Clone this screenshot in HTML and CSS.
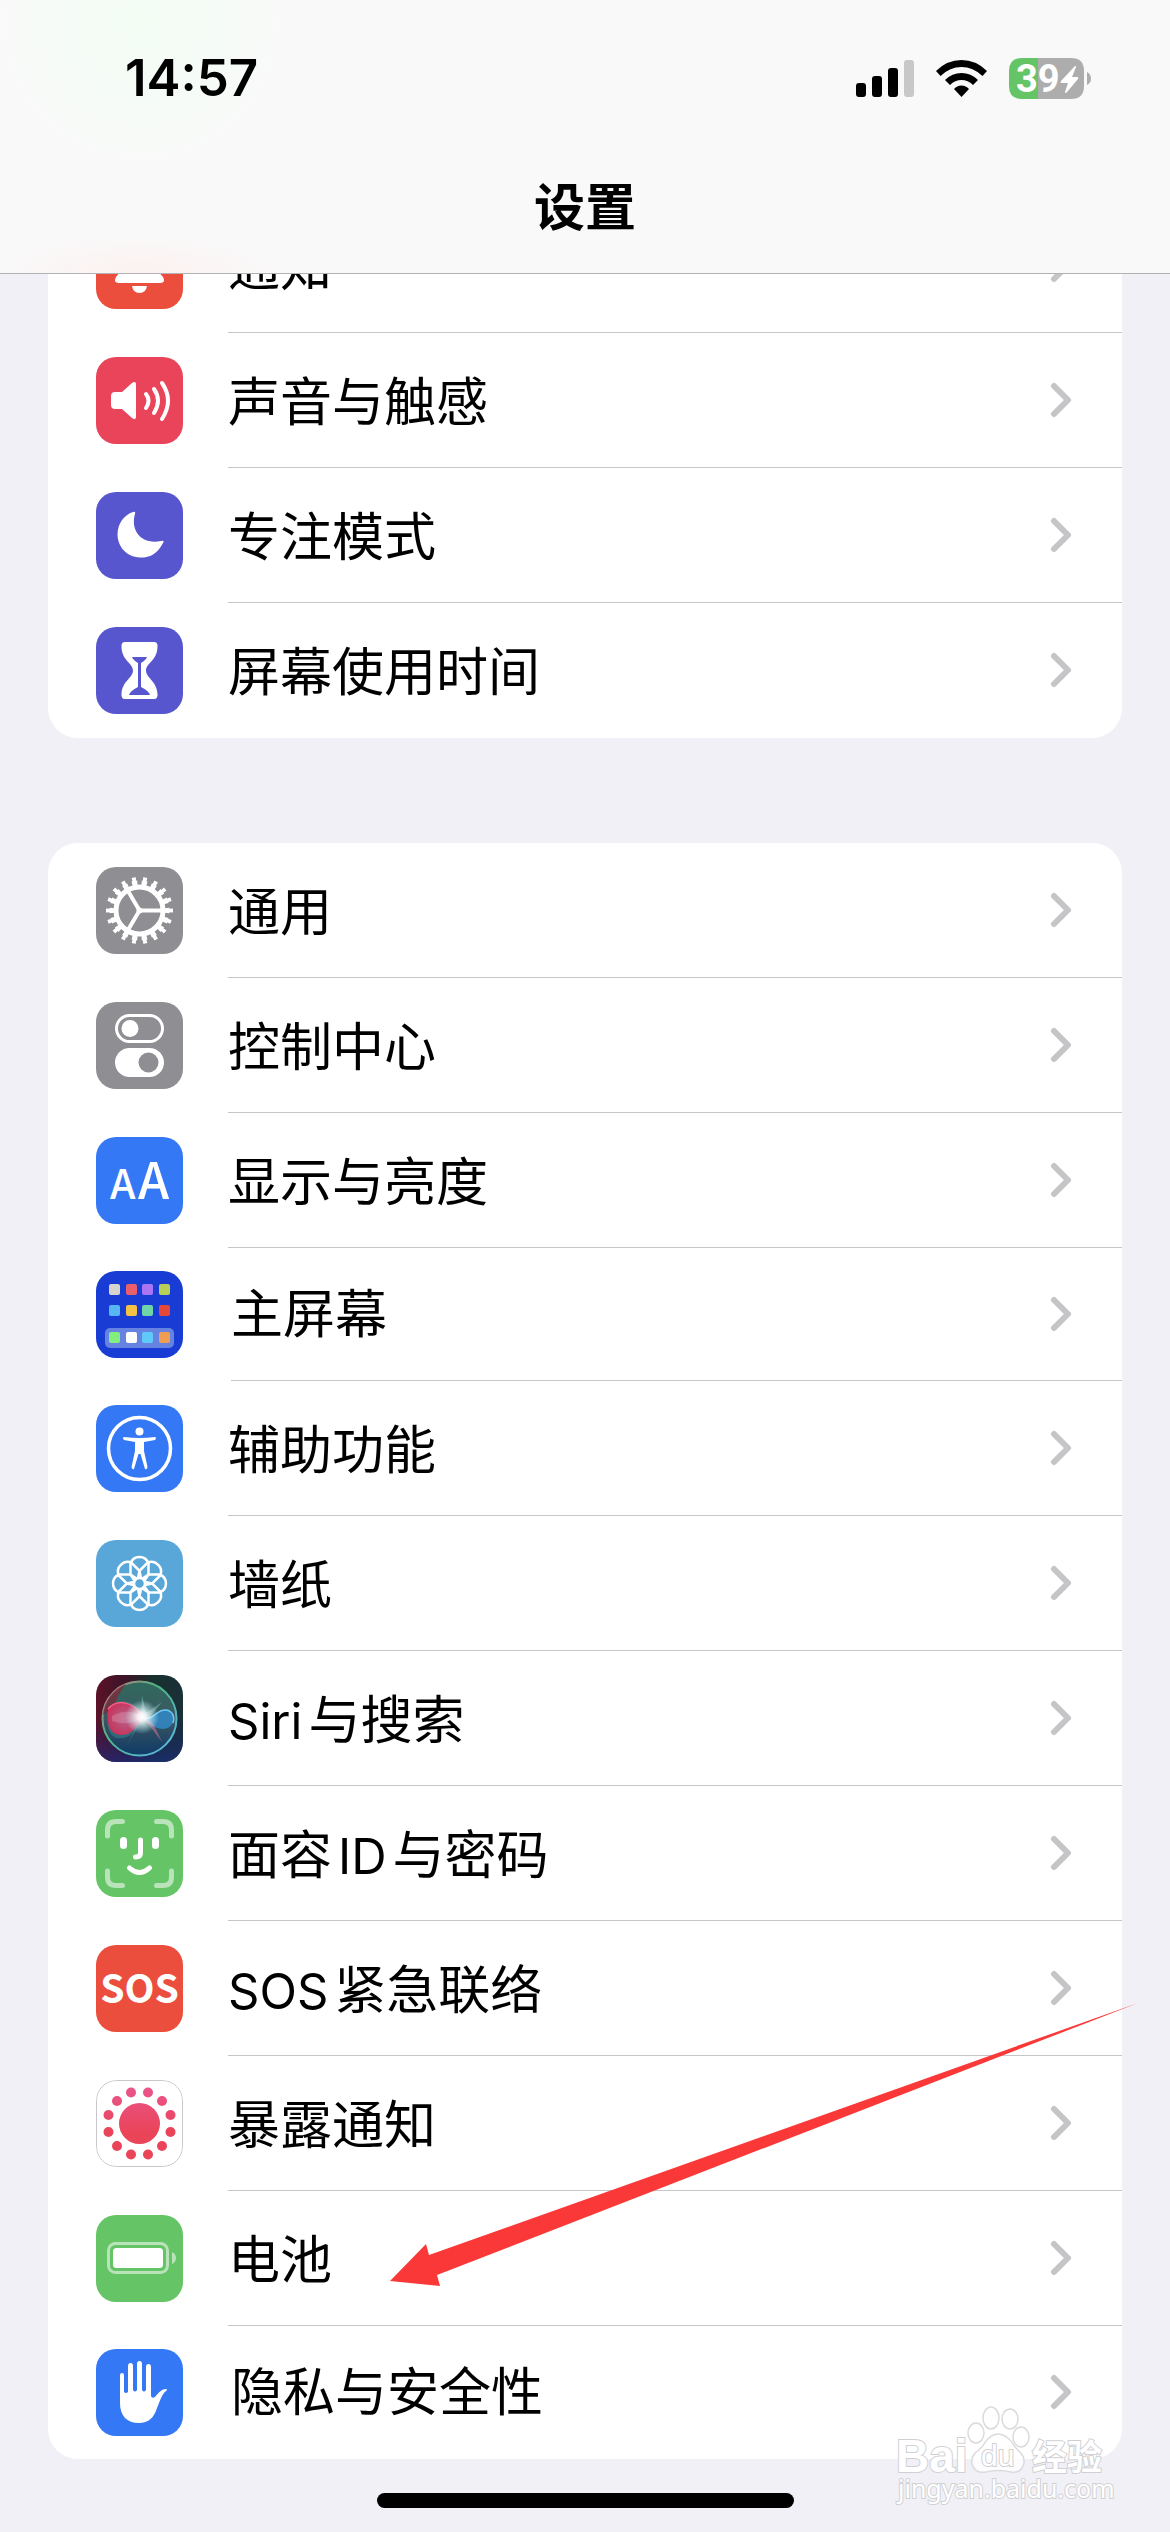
FILE: index.html
```html
<!DOCTYPE html>
<html lang="zh-CN">
<head>
<meta charset="utf-8">
<meta name="viewport" content="width=device-width, initial-scale=1">
<title>设置</title>
<link rel="stylesheet" href="styles.css">
</head>
<body>
<svg class="defs" width="0" height="0" aria-hidden="true">
  <defs>
    <path id="chevron" d="M4 4 18 18 4 32"/>
    <path id="petal" d="M-3-5-9-9V-20A9.500 9.500 0 0 1 9-20V-9L3-5"/>
    <linearGradient id="pink" x1="0" y1="0" x2="0" y2="87" gradientUnits="userSpaceOnUse"><stop offset=".1" stop-color="#e9558a"/><stop offset=".6" stop-color="#ea4459"/></linearGradient>
    <linearGradient id="siri-bg" x1="0" y1="0" x2="1" y2="0"><stop offset="0" stop-color="#5d1228"/><stop offset=".35" stop-color="#3a1428"/><stop offset=".65" stop-color="#17302e"/><stop offset="1" stop-color="#1b3038"/></linearGradient>
    <linearGradient id="siri-low" x1="0" y1="0" x2="0" y2="1"><stop offset=".5" stop-color="#10206a" stop-opacity="0"/><stop offset="1" stop-color="#1c2c80" stop-opacity=".7"/></linearGradient>
    <linearGradient id="siri-ring" x1="0" y1="0" x2="1" y2="1"><stop offset="0" stop-color="#d06f80"/><stop offset=".4" stop-color="#4db583"/><stop offset="1" stop-color="#5fb4f2"/></linearGradient>
    <linearGradient id="siri-orb" x1="0" y1="0" x2="0" y2="1"><stop offset="0" stop-color="#2f6a5c"/><stop offset=".5" stop-color="#3c5862"/><stop offset="1" stop-color="#0e3a66"/></linearGradient>
    <radialGradient id="siri-red"><stop offset="0" stop-color="#c0628e"/><stop offset="1" stop-color="#d6305c"/></radialGradient>
    <radialGradient id="siri-glow"><stop offset="0" stop-color="#fff"/><stop offset=".25" stop-color="#fff" stop-opacity=".9"/><stop offset="1" stop-color="#bff" stop-opacity="0"/></radialGradient>
  </defs>
</svg>

<header class="header">
  <div class="status">
    <time class="clock">14:57</time>
    <div class="indicators">
      <svg width="58" height="37" viewBox="0 0 58 37" role="img" aria-label="信号"><rect y="23" width="10" height="14" rx="3"/><rect x="16" y="16" width="10" height="21" rx="3"/><rect x="32" y="8" width="10" height="29" rx="3"/><rect x="48" width="10" height="37" rx="3" fill="#c8c8c8"/></svg>
      <svg width="51" height="37" viewBox="0 0 51 37" role="img" aria-label="无线网络"><path d="M0 11Q11 0 25.500 0T51 11L46.500 16Q37 7 25.500 7T4.500 16ZM9 20Q16 13 25.500 13T42 20L37 25Q32 20 25.500 20T14 25ZM18 29Q21 25.500 25.500 25.500T33 29L25.500 37Z"/></svg>
      <svg class="battery" width="83" height="41" viewBox="0 0 83 41" role="img" aria-label="电量 39"><path d="M29 0H62Q75 0 75 13V28Q75 41 62 41H29Z" fill="#adadad"/><path d="M29 0H13Q0 0 0 13V28Q0 41 13 41H29Z" fill="#65c466"/><path d="M78 14Q82 16 82 20.500T78 27Z" fill="#adadad"/><text x="7" y="34">39</text><path d="M66 8 52 23Q51 25 53 25H59L56 34Q56 36 58 34L69 21Q70 19 68 19H63L67 9Q67 7 66 8Z" fill="#fff"/></svg>
    </div>
  </div>
  <h1 class="title">设置</h1>
</header>

<main class="content">
  <ul class="group">
    <li><a class="row" href="#notifications">
      <svg class="icon red" viewBox="0 0 87 87"><path fill="#fff" d="M43.500 14C31 14 28 24 28 34 28 47 24 50 20 55Q17 61 23 61H64Q70 61 67 55C63 50 59 47 59 34 59 24 56 14 43.500 14ZM36 64H51Q50 71 43.500 71T36 64Z"/></svg>
      <span class="body"><span class="label">通知</span><svg class="chevron" viewBox="0 0 22 36"><use href="#chevron"/></svg></span></a></li>
    <li><a class="row" href="#sounds">
      <svg class="icon rose" viewBox="0 0 87 87"><path fill="#fff" d="M19 35H26L36 26Q40 23 40 28V59Q40 64 36 61L26 52H19Q15 52 15 48V39Q15 35 19 35Z"/><path class="line" stroke-width="4" d="M50 37Q55 43.500 50 51M58 32Q66 43.500 58 56M66 26Q78 43.500 66 62"/></svg>
      <span class="body"><span class="label">声音与触感</span><svg class="chevron" viewBox="0 0 22 36"><use href="#chevron"/></svg></span></a></li>
    <li><a class="row" href="#focus">
      <svg class="icon indigo" viewBox="0 0 87 87"><path fill="#fff" d="M37 20Q40 19 39 22C34 39 46 53 65 49Q69 48 67 51C61 63 52 66 44 65.500 30 65 21.500 54 21.500 42 22 31 28 23 37 20Z"/></svg>
      <span class="body"><span class="label">专注模式</span><svg class="chevron" viewBox="0 0 22 36"><use href="#chevron"/></svg></span></a></li>
    <li><a class="row" href="#screen-time">
      <svg class="icon indigo" viewBox="0 0 87 87"><path fill="#fff" d="M29 15H58Q62 15 61.500 20C61 34 50 36 50 43.500S61 54 61.500 67Q62 72 58 72H29Q25 72 25.500 67C26 54 37 51 37 43.500S26 34 25.500 20Q25 15 29 15Z"/><path fill="#5856ce" d="M36 30H51Q50 33 45 36V60Q53 64 54 68H33Q34 64 42 60V36Q37 33 36 30Z"/></svg>
      <span class="body"><span class="label">屏幕使用时间</span><svg class="chevron" viewBox="0 0 22 36"><use href="#chevron"/></svg></span></a></li>
  </ul>

  <ul class="group">
    <li><a class="row" href="#general">
      <svg class="icon gray" viewBox="0 0 87 87"><g fill="none" stroke="#fff"><circle cx="43.500" cy="43.500" r="23.500" stroke-width="5"/><circle cx="43.500" cy="43.500" r="27.500" stroke-width="5" pathLength="36" stroke-dasharray="1.100 .9" stroke-dashoffset=".550"/><circle cx="43.500" cy="43.500" r="31" stroke-width="5" pathLength="36" stroke-dasharray=".700 1.300" stroke-dashoffset=".350"/><path stroke-width="4" d="M43.500 43.500H66M43.500 43.500 32 24M43.500 43.500 32 63"/></g><circle cx="43.500" cy="43.500" r="3" fill="#fff"/></svg>
      <span class="body"><span class="label">通用</span><svg class="chevron" viewBox="0 0 22 36"><use href="#chevron"/></svg></span></a></li>
    <li><a class="row" href="#control-center">
      <svg class="icon gray" viewBox="0 0 87 87"><rect x="20.500" y="13.500" width="46" height="26" rx="13" fill="none" stroke="#fff" stroke-width="3"/><circle cx="34" cy="26.500" r="8.500" fill="#fff"/><rect x="19" y="46" width="49" height="29" rx="14.500" fill="#fff"/><circle cx="52.500" cy="60.500" r="10" fill="#8e8e93"/></svg>
      <span class="body"><span class="label">控制中心</span><svg class="chevron" viewBox="0 0 22 36"><use href="#chevron"/></svg></span></a></li>
    <li><a class="row" href="#display">
      <svg class="icon blue" viewBox="0 0 87 87"><text class="glyph" x="14" y="62" font-size="41">A</text><text class="glyph" x="42" y="62" font-size="50">A</text></svg>
      <span class="body"><span class="label">显示与亮度</span><svg class="chevron" viewBox="0 0 22 36"><use href="#chevron"/></svg></span></a></li>
    <li><a class="row compact" href="#home-screen">
      <svg class="icon navy" viewBox="0 0 87 87"><rect x="9" y="57" width="69" height="20" rx="5" fill="#6783e2"/><rect x="13" y="13" width="11" height="11" rx="2" fill="#d6d4cd"/><rect x="30" y="13" width="11" height="11" rx="2" fill="#ea5f6c"/><rect x="46" y="13" width="11" height="11" rx="2" fill="#aa75f4"/><rect x="63" y="13" width="11" height="11" rx="2" fill="#b8cf55"/><rect x="13" y="34" width="11" height="11" rx="2" fill="#57b7f4"/><rect x="30" y="34" width="11" height="11" rx="2" fill="#f4c245"/><rect x="46" y="34" width="11" height="11" rx="2" fill="#70d5a8"/><rect x="63" y="34" width="11" height="11" rx="2" fill="#e54839"/><rect x="13" y="61" width="11" height="11" rx="2" fill="#83ee80"/><rect x="30" y="61" width="11" height="11" rx="2" fill="#fff"/><rect x="46" y="61" width="11" height="11" rx="2" fill="#5fc9f8"/><rect x="63" y="61" width="11" height="11" rx="2" fill="#f09d54"/></svg>
      <span class="body"><span class="label">主屏幕</span><svg class="chevron" viewBox="0 0 22 36"><use href="#chevron"/></svg></span></a></li>
    <li><a class="row" href="#accessibility">
      <svg class="icon blue" viewBox="0 0 87 87"><circle cx="43.500" cy="43.500" r="31" fill="none" stroke="#fff" stroke-width="3.500"/><circle cx="43.500" cy="26.500" r="4" fill="#fff"/><path fill="#fff" d="M28 32Q43.500 34 59 32 61 33 59 35L48 37V46L51.500 62Q51 65 49 64L44.500 49H42.500L38 64Q36 65 35.500 62L39 46V37L28 35Q26 33 28 32Z"/></svg>
      <span class="body"><span class="label">辅助功能</span><svg class="chevron" viewBox="0 0 22 36"><use href="#chevron"/></svg></span></a></li>
    <li><a class="row" href="#wallpaper">
      <svg class="icon sky" viewBox="0 0 87 87"><g transform="translate(43.500 43.500)" fill="none" stroke="#fff" stroke-width="2.500"><circle r="5.500"/><use href="#petal"/><use href="#petal" transform="rotate(45)"/><use href="#petal" transform="rotate(90)"/><use href="#petal" transform="rotate(135)"/><use href="#petal" transform="rotate(180)"/><use href="#petal" transform="rotate(225)"/><use href="#petal" transform="rotate(270)"/><use href="#petal" transform="rotate(315)"/></g></svg>
      <span class="body"><span class="label">墙纸</span><svg class="chevron" viewBox="0 0 22 36"><use href="#chevron"/></svg></span></a></li>
    <li><a class="row" href="#siri">
      <svg class="icon" viewBox="0 0 87 87"><rect width="87" height="87" fill="url(#siri-bg)"/><rect width="87" height="87" fill="url(#siri-low)"/><circle cx="43.500" cy="43.500" r="37" fill="url(#siri-orb)" stroke="url(#siri-ring)" stroke-width="2"/><path d="M7 40A37 37 0 0 1 30 9Q20 22 18 33Z" fill="#7a2a3c" opacity=".8"/><path d="M20 28Q38 22 48 42 38 66 20 63 10 58 12 44 12 32 20 28Z" fill="#3a8f94" opacity=".45"/><path d="M12 34C22 22 38 28 47 41 40 56 32 61 24 60 14 59 10 50 12 34Z" fill="url(#siri-red)" opacity=".9"/><path d="M16 41Q32 32 47 42 34 52 16 46Z" fill="#e9a0b8" opacity=".35"/><path d="M12 34C22 22 38 28 47 41" fill="none" stroke="#f45c86" stroke-width="1.500"/><path d="M46 43C58 46 60 34 70 35 77 36 79 42 77 48 72 57 60 56 46 43Z" fill="#3188c8" opacity=".85"/><path d="M46 43C58 46 60 34 70 35 77 36 79 42 77 48" fill="none" stroke="#6cc8f4" stroke-width="1.500"/><path d="M47 42 66 67 57 48Z" fill="#e07a9a" opacity=".5"/><path d="M45 44 30 72 38 58Z" fill="#7cc0e0" opacity=".5"/><path d="M45 42 46 20 50 38 66 27 53 43Z" fill="#bff" opacity=".3"/><circle cx="46" cy="42" r="17" fill="url(#siri-glow)"/></svg>
      <span class="body"><span class="label"><span class="latin-start">Siri</span>与搜索</span><svg class="chevron" viewBox="0 0 22 36"><use href="#chevron"/></svg></span></a></li>
    <li><a class="row" href="#face-id">
      <svg class="icon green" viewBox="0 0 87 87"><path class="line" stroke-width="5" opacity=".55" d="M11.500 26V20Q11.500 11.500 20 11.500H26.500M60.500 11.500H67Q75.500 11.500 75.500 20V26M75.500 61V67Q75.500 75.500 67 75.500H60.500M26.500 75.500H20Q11.500 75.500 11.500 67V61"/><rect x="24" y="27" width="7" height="12" rx="3.500" fill="#fff"/><rect x="56" y="27" width="7" height="12" rx="3.500" fill="#fff"/><path class="line" stroke-width="5" d="M44.500 30V43Q44.500 47 39.500 47M33.500 58Q43.500 67 53.500 58"/></svg>
      <span class="body"><span class="label">面容<span class="latin">ID</span>与密码</span><svg class="chevron" viewBox="0 0 22 36"><use href="#chevron"/></svg></span></a></li>
    <li><a class="row" href="#sos">
      <svg class="icon red" viewBox="0 0 87 87"><text class="sos" x="43.500" y="58" text-anchor="middle">SOS</text></svg>
      <span class="body"><span class="label"><span class="latin-start">SOS</span>紧急联络</span><svg class="chevron" viewBox="0 0 22 36"><use href="#chevron"/></svg></span></a></li>
    <li><a class="row" href="#exposure">
      <svg class="icon" viewBox="0 0 87 87"><g fill="url(#pink)"><circle cx="43.500" cy="43.500" r="20.500"/><circle cx="74.500" cy="35" r="5"/><circle cx="66" cy="21" r="5"/><circle cx="52" cy="12.500" r="5"/><circle cx="35" cy="12.500" r="5"/><circle cx="21" cy="21" r="5"/><circle cx="12.500" cy="35" r="5"/><circle cx="12.500" cy="52" r="5"/><circle cx="21" cy="66" r="5"/><circle cx="35" cy="74.500" r="5"/><circle cx="52" cy="74.500" r="5"/><circle cx="66" cy="66" r="5"/><circle cx="74.500" cy="52" r="5"/></g><rect x=".5" y=".5" width="86" height="86" rx="20" fill="none" stroke="#c8c8ca"/></svg>
      <span class="body"><span class="label">暴露通知</span><svg class="chevron" viewBox="0 0 22 36"><use href="#chevron"/></svg></span></a></li>
    <li><a class="row" href="#battery">
      <svg class="icon green" viewBox="0 0 87 87"><rect x="12.500" y="28.500" width="59" height="29" rx="7" fill="none" stroke="#fff" stroke-width="3" opacity=".55"/><rect x="17" y="33" width="50" height="20" rx="3.500" fill="#fff"/><path d="M76 37Q80 39 80 43T76 49Z" fill="#fff" opacity=".55"/></svg>
      <span class="body"><span class="label">电池</span><svg class="chevron" viewBox="0 0 22 36"><use href="#chevron"/></svg></span></a></li>
    <li><a class="row compact" href="#privacy">
      <svg class="icon blue" viewBox="0 0 87 87"><path fill="#fff" d="M24 26Q24 24 26 24T28 26V43Q30 45 32 43V17Q32 14 34.500 14T37 17V41Q39 44 41 41V15Q41 12 43.500 12T46 15V41Q48 44 50 41V18Q50 15 52.500 15T55 18V47Q56 50 59 48C63 43 66 40 70 40Q72 40 70 42C66 45 64 52 61 59 58 69 52 74 43 74 31 74 24 67 24 54Z"/></svg>
      <span class="body"><span class="label">隐私与安全性</span><svg class="chevron" viewBox="0 0 22 36"><use href="#chevron"/></svg></span></a></li>
  </ul>
  <div class="home-indicator"></div>

  <svg class="arrow" width="750" height="285" viewBox="0 0 750 285" aria-hidden="true"><path d="M0 279 36 242 39 253 748 1 47 273 50 284Z" fill="#fb3838"/></svg>
  <svg class="watermark" width="214" height="110" viewBox="0 0 214 110" role="img" aria-label="Baidu 经验">
    <g fill="#fff" fill-opacity=".75" stroke="#dadadc" stroke-width="1.500"><ellipse cx="82" cy="31" rx="8" ry="10"/><ellipse cx="97" cy="16" rx="8" ry="11"/><ellipse cx="116" cy="17" rx="8" ry="10"/><ellipse cx="127" cy="35" rx="8" ry="10"/><path d="M92 39Q104 25 117 39 121 46 127 51C134 60 128 72 117 70Q104 67 92 70C79 72 74 60 81 51Q88 46 92 39Z"/></g>
    <g class="mark"><text class="mark-name" x="2" y="70">Bai</text><text class="mark-du" x="87" y="64">du</text><text class="mark-cjk" x="138" y="68">经验</text><text class="mark-url" x="4" y="96">jingyan.baidu.com</text></g>
  </svg>
</main>
</body>
</html>
```
FILE: styles.css
```css
* { box-sizing: border-box; }

body {
  margin: 0;
  background: #f1f0f6;
  color: #000;
  font-family: Inter, "Noto Sans CJK SC", sans-serif;
  font-size: 51px;
  line-height: 60px;
}

.defs { position: absolute; }

.header {
  position: relative;
  z-index: 1;
  height: 274px;
  border-bottom: 1px solid #b2b2b4;
  background:
    radial-gradient(circle at 12% 8%, #f2fdf4 0, #f2fdf400 150px),
    radial-gradient(ellipse at 12% 100%, #fcf2f1 0, #fcf2f100 150px),
    #f9f9f9;
}

.status {
  display: flex;
  justify-content: space-between;
  align-items: center;
  height: 156px;
  padding: 0 78px 0 125px;
}

.clock { font-weight: 600; }

.indicators {
  display: flex;
  align-items: center;
  gap: 22px;
}

.battery text {
  fill: #fff;
  font-family: Roboto, sans-serif;
  font-size: 38px;
  font-weight: 700;
}

.title {
  margin: 0;
  padding-top: 22px;
  font-size: 51px;
  font-weight: 700;
  line-height: 60px;
  text-align: center;
}

.content {
  position: relative;
  padding-bottom: 24px;
}

.group {
  margin: 0 48px 105px;
  padding: 0;
  border-radius: 30px;
  background: #fff;
  list-style: none;
}

.group:first-child { margin-top: -76px; }
.group:nth-child(2) { margin-bottom: 34px; }

.row {
  display: flex;
  align-items: center;
  gap: 45px;
  height: 135px;
  padding-left: 48px;
  color: inherit;
  text-decoration: none;
}

.row.compact {
  gap: 48px;
  height: 133px;
}

.body {
  display: flex;
  flex: 1;
  align-items: center;
  justify-content: space-between;
  align-self: stretch;
  padding-right: 50px;
  border-bottom: 1px solid #c6c6c8;
}

li:last-child .body { border-bottom-color: transparent; }

.label {
  padding-top: 6px;
  font-size: 52px;
}

.compact .label { padding-top: 2px; }

.latin,
.latin-start {
  margin-right: 6px;
  font-size: 49px;
}

.latin { margin-left: 6px; }

.chevron {
  width: 22px;
  height: 36px;
  fill: none;
  stroke: #c5c5c7;
  stroke-width: 6;
  stroke-linecap: round;
  stroke-linejoin: round;
}

.icon {
  width: 87px;
  height: 87px;
  border-radius: 20px;
}

.red { background: #eb4e3d; }
.rose { background: #ea445a; }
.indigo { background: #5856ce; }
.gray { background: #8e8e93; }
.blue { background: #3478f6; }
.navy { background: #183cd4; }
.sky { background: #59a7d8; }
.green { background: #65c466; }

.line {
  fill: none;
  stroke: #fff;
  stroke-linecap: round;
  stroke-linejoin: round;
}

.glyph {
  fill: #fff;
  font-family: "Noto Sans CJK SC", sans-serif;
  font-weight: 500;
}

.sos {
  fill: #fff;
  font-family: "Noto Sans CJK SC", sans-serif;
  font-size: 39px;
  font-weight: 700;
}

.home-indicator {
  width: 417px;
  max-width: 60%;
  height: 15px;
  margin: 0 auto;
  border-radius: 8px;
  background: #000;
}

.arrow {
  position: absolute;
  right: 30px;
  bottom: 245px;
}

.watermark {
  position: absolute;
  right: 62px;
  bottom: 20px;
  overflow: visible;
}

.mark {
  fill: #fff;
  stroke: #d0d0d3;
  stroke-width: 2px;
  paint-order: stroke;
}

.mark-name {
  font-family: "Liberation Sans", sans-serif;
  font-size: 46px;
  font-weight: 700;
}

.mark-du {
  font-family: "Liberation Sans", sans-serif;
  font-size: 30px;
}

.mark-cjk {
  font-size: 35px;
  font-weight: 700;
}

.mark-url {
  font-family: "Noto Sans", sans-serif;
  font-size: 25px;
}
```
